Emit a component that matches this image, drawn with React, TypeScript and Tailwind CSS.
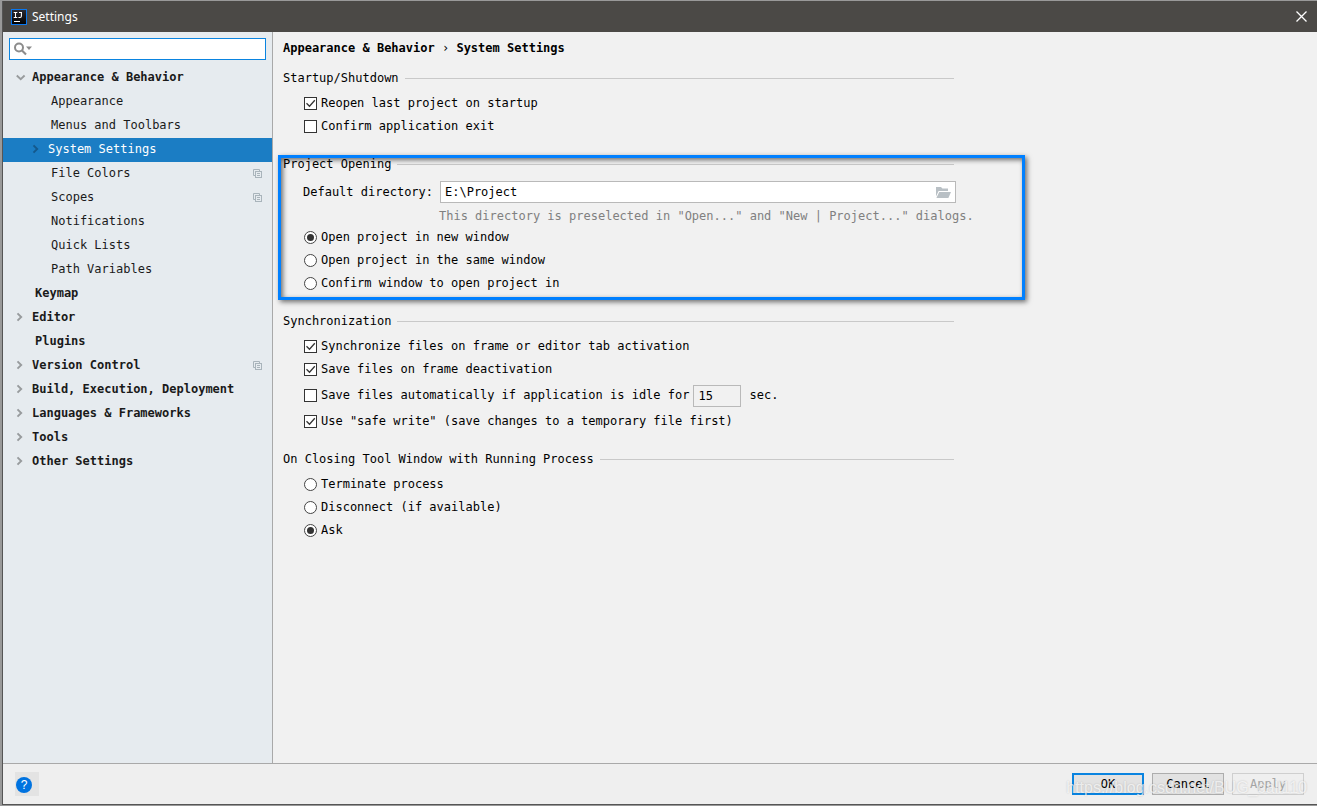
import { ReactNode, useState } from 'react';
import clsx from 'clsx';

interface TreeItem {
  label: string;
  level: 0 | 1;
  state?: 'open' | 'closed';
  shared?: boolean;
}

const TREE: TreeItem[] = [
  { label: 'Appearance & Behavior', level: 0, state: 'open' },
  { label: 'Appearance', level: 1 },
  { label: 'Menus and Toolbars', level: 1 },
  { label: 'System Settings', level: 1, state: 'closed' },
  { label: 'File Colors', level: 1, shared: true },
  { label: 'Scopes', level: 1, shared: true },
  { label: 'Notifications', level: 1 },
  { label: 'Quick Lists', level: 1 },
  { label: 'Path Variables', level: 1 },
  { label: 'Keymap', level: 0 },
  { label: 'Editor', level: 0, state: 'closed' },
  { label: 'Plugins', level: 0 },
  { label: 'Version Control', level: 0, state: 'closed', shared: true },
  { label: 'Build, Execution, Deployment', level: 0, state: 'closed' },
  { label: 'Languages & Frameworks', level: 0, state: 'closed' },
  { label: 'Tools', level: 0, state: 'closed' },
  { label: 'Other Settings', level: 0, state: 'closed' },
];

function Logo() {
  return (
    <svg width="16" height="16" viewBox="0 0 16 16" aria-hidden="true">
      <defs>
        <linearGradient id="logo" x1="0" y1="0" x2="0" y2="1">
          <stop offset="0" stopColor="#2b2b33" />
          <stop offset="1" stopColor="#000" />
        </linearGradient>
      </defs>
      <rect x="0.5" y="0.5" width="15" height="15" fill="url(#logo)" stroke="#0a78f0" />
      <path
        d="M2.7 3.5h3.6M4.5 3.5v5M2.7 8.5h3.6M8 3.5h3M10.4 3.5v3.6q0 1.4-1.4 1.4H7.4M3 12.5h6"
        fill="none"
        stroke="#fff"
        strokeWidth="1.1"
      />
    </svg>
  );
}

function SearchIcon() {
  return (
    <svg width="20" height="14" viewBox="0 0 20 14" fill="none" aria-hidden="true">
      <circle cx="5" cy="5.5" r="4" stroke="#8c8c8c" strokeWidth="2" />
      <path d="M8 8.5l4 4" stroke="#8c8c8c" strokeWidth="2.2" />
      <path d="M12 4.5h6l-3 3.4z" fill="#8c8c8c" />
    </svg>
  );
}

function Chevron({ open, selected }: { open: boolean; selected: boolean }) {
  return (
    <svg width="16" height="12" viewBox="0 0 16 12" fill="none" aria-hidden="true">
      <path
        d={open ? 'M0.8 4.5l3.9 3.7L8.6 4.5' : 'M1.5 2.3l3.7 3.7L1.5 9.7'}
        stroke={selected ? '#14598c' : '#989b9d'}
        strokeWidth="1.9"
      />
    </svg>
  );
}

function SharedIcon() {
  return (
    <svg width="9" height="9" viewBox="0 0 9 9" fill="none" stroke="#a9b4bb" aria-hidden="true">
      <path d="M2 6.5H0.5v-6h6V2" />
      <rect x="2.5" y="2.5" width="6" height="6" />
      <path d="M4 4.5h3M4 6.5h3" />
    </svg>
  );
}

function FolderIcon() {
  return (
    <svg width="15" height="11" viewBox="0 0 15 11" fill="#b9c0c5" aria-hidden="true">
      <path d="M0 0h5l1.4 1.6H12V4H2.6L0 9.5z" />
      <path d="M3.2 5H15l-2.6 6H0.4z" />
    </svg>
  );
}

function Section({ title, children }: { title: string; children: ReactNode }) {
  return (
    <fieldset className="mb-[18px] min-w-0">
      <legend className="flex h-4 w-full items-center gap-1.5 pr-0.5 leading-4">
        <span>{title}</span>
        <span className="h-px flex-1 bg-[#c9c9c9]" />
      </legend>
      {children}
    </fieldset>
  );
}

interface OptionProps {
  label: string;
  checked: boolean;
  onChange: () => void;
}

function CheckOption({ label, checked, onChange }: OptionProps) {
  return (
    <label className="flex h-[23px] items-center gap-1 whitespace-nowrap">
      <span className="relative flex h-[13px] w-[13px]">
        <input
          type="checkbox"
          checked={checked}
          onChange={onChange}
          className="h-[13px] w-[13px] appearance-none border border-[#333] bg-white"
        />
        {checked && (
          <svg className="pointer-events-none absolute inset-0" width="13" height="13" viewBox="0 0 13 13" fill="none">
            <path d="M2.5 6.3l3 3 5.3-6" stroke="#333" strokeWidth="1.3" />
          </svg>
        )}
      </span>
      <span className="pb-0.5">{label}</span>
    </label>
  );
}

function RadioOption({ label, checked, onChange, name }: OptionProps & { name: string }) {
  return (
    <label className="flex h-[23px] items-center gap-1 whitespace-nowrap">
      <span className="relative flex h-[13px] w-[13px]">
        <input
          type="radio"
          name={name}
          checked={checked}
          onChange={onChange}
          className="h-[13px] w-[13px] appearance-none rounded-full border border-[#444] bg-white"
        />
        {checked && <span className="pointer-events-none absolute inset-[3px] rounded-full bg-[#333]" />}
      </span>
      <span className="pb-0.5">{label}</span>
    </label>
  );
}

function RadioList({ name, options, initial }: { name: string; options: string[]; initial: string }) {
  const [value, setValue] = useState(initial);
  return (
    <>
      {options.map((option) => (
        <RadioOption key={option} name={name} label={option} checked={value === option} onChange={() => setValue(option)} />
      ))}
    </>
  );
}

function Sidebar() {
  const [selected, setSelected] = useState('System Settings');

  return (
    <aside className="w-[270px] shrink-0 border-r border-[#a9a9a9] bg-[#e6ebef]">
      <div className="px-1.5 pt-1.5">
        <label className="flex h-[22px] items-center border border-[#0a84e0] bg-white pl-1">
          <SearchIcon />
          <input type="text" aria-label="Search settings" className="min-w-0 flex-1 bg-transparent px-1 outline-none" />
        </label>
      </div>
      <ul className="pt-1.5">
        {TREE.map((item) => {
          const isSelected = item.label === selected;
          return (
            <li key={item.label}>
              <button
                type="button"
                onClick={() => setSelected(item.label)}
                className={clsx(
                  'flex h-6 w-full items-center pr-2.5 pb-0.5 text-left',
                  item.level === 0 && 'font-bold',
                  item.level === 0 && (item.state ? 'pl-[13px]' : 'pl-8'),
                  item.level === 1 && (item.state ? 'pl-[29px]' : 'pl-12'),
                  isSelected ? 'bg-[#1b7dc4] text-white' : 'text-[#1a1a1a]',
                )}
              >
                {item.state && <Chevron open={item.state === 'open'} selected={isSelected} />}
                <span className="flex-1 whitespace-nowrap">{item.label}</span>
                {item.shared && <SharedIcon />}
              </button>
            </li>
          );
        })}
      </ul>
    </aside>
  );
}

function SystemSettings() {
  const [checks, setChecks] = useState({ reopen: true, confirm: false, sync: true, save: true, idle: false, safe: true });
  const toggle = (key: keyof typeof checks) => () => setChecks({ ...checks, [key]: !checks[key] });

  return (
    <main className="min-w-0 flex-1 bg-[#f1f1f1] pt-2 pl-2.5">
      <h1 className="mb-3.5 leading-4 font-bold">
        Appearance &amp; Behavior <span className="font-normal">›</span> System Settings
      </h1>

      <form className="max-w-[673px]">
        <Section title="Startup/Shutdown">
          <div className="pt-1.5 pl-[21px]">
            <CheckOption label="Reopen last project on startup" checked={checks.reopen} onChange={toggle('reopen')} />
            <CheckOption label="Confirm application exit" checked={checks.confirm} onChange={toggle('confirm')} />
          </div>
        </Section>

        <div className="relative">
          <Section title="Project Opening">
            <div className="flex pt-[9px] pl-5">
              <label htmlFor="directory" className="w-[137px] shrink-0 leading-[22px]">
                Default directory:
              </label>
              <div className="flex h-[22px] flex-1 items-center border border-[#b9b9b9] bg-white pr-1">
                <input
                  id="directory"
                  type="text"
                  defaultValue="E:\Project"
                  className="min-w-0 flex-1 bg-transparent px-1 outline-none"
                />
                <button type="button" aria-label="Browse">
                  <FolderIcon />
                </button>
              </div>
            </div>
            <p className="pt-[5px] pl-[156px] leading-4 whitespace-nowrap text-[#808080]">
              This directory is preselected in "Open..." and "New | Project..." dialogs.
            </p>
            <div className="pt-0.5 pl-[21px]">
              <RadioList
                name="opening"
                initial="Open project in new window"
                options={['Open project in new window', 'Open project in the same window', 'Confirm window to open project in']}
              />
            </div>
          </Section>
          {/* highlight frame around the group */}
          <div className="pointer-events-none absolute -top-px -right-[69px] -bottom-[5px] -left-[5px] border-3 border-[#0080ff] shadow-[2px_2px_5px_rgba(0,0,0,0.55),inset_2px_2px_5px_rgba(0,0,0,0.55)]" />
        </div>

        <Section title="Synchronization">
          <div className="pt-1.5 pl-[21px]">
            <CheckOption
              label="Synchronize files on frame or editor tab activation"
              checked={checks.sync}
              onChange={toggle('sync')}
            />
            <CheckOption label="Save files on frame deactivation" checked={checks.save} onChange={toggle('save')} />
            <div className="flex h-[29px] items-center gap-1">
              <CheckOption
                label="Save files automatically if application is idle for"
                checked={checks.idle}
                onChange={toggle('idle')}
              />
              <input
                type="text"
                aria-label="Idle seconds"
                defaultValue="15"
                className="h-[22px] w-12 border border-[#b9b9b9] bg-transparent px-1 outline-none"
              />
              <span className="pb-0.5 pl-1">sec.</span>
            </div>
            <CheckOption
              label={'Use "safe write" (save changes to a temporary file first)'}
              checked={checks.safe}
              onChange={toggle('safe')}
            />
          </div>
        </Section>

        <Section title="On Closing Tool Window with Running Process">
          <div className="pt-1.5 pl-[21px]">
            <RadioList name="closing" initial="Ask" options={['Terminate process', 'Disconnect (if available)', 'Ask']} />
          </div>
        </Section>
      </form>
    </main>
  );
}

function Footer() {
  return (
    <footer className="relative flex h-[41px] items-center justify-between border-t border-[#a9a9a9] bg-[#efefef] pr-[13px] pl-3">
      <button type="button" aria-label="Help" className="flex h-6 w-6 items-center bg-[#e3e3e3] pt-0.5 pl-px">
        <span className="flex h-4 w-4 items-center justify-center rounded-full bg-[#0073e0] font-['Liberation_Sans',sans-serif] text-[12px] leading-4 text-white">
          ?
        </span>
      </button>
      <div className="flex gap-2">
        <button type="button" className="h-[22px] w-[72px] border-2 border-[#0a84e0] bg-[#e2e2e2] leading-4">
          OK
        </button>
        <button type="button" className="h-[22px] w-[72px] border border-[#adadad] bg-[#e2e2e2] leading-4">
          Cancel
        </button>
        <button type="button" disabled className="h-[22px] w-[72px] border border-[#cfcfcf] leading-4 text-[#a5a5a5]">
          Apply
        </button>
      </div>
      <span className="pointer-events-none absolute right-2.5 bottom-1.5 font-['Liberation_Sans',sans-serif] text-[16px] leading-5 text-white/70 [text-shadow:0_0_2px_rgba(0,0,0,0.2)]">
        https://blog.csdn.net/BUG_call110
      </span>
    </footer>
  );
}

export default function App() {
  return (
    <div className="flex min-h-screen flex-col border-t border-b border-l-2 border-[#999] font-['DejaVu_Sans_Mono',monospace] text-[12px] text-black">
      <div className="flex flex-1 flex-col border-b border-l border-[#555]">
        <header className="flex h-[31px] items-center bg-[#4b4946] pr-2.5 pl-2 text-white">
          <Logo />
          <span className="flex-1 pl-[5px] font-['Noto_Sans',sans-serif] text-[12px]">Settings</span>
          <button type="button" aria-label="Close">
            <svg width="11" height="11" viewBox="0 0 11 11" stroke="#fff" strokeWidth="1.3">
              <path d="M0.5 0.5l10 10M10.5 0.5l-10 10" />
            </svg>
          </button>
        </header>
        <div className="flex flex-1">
          <Sidebar />
          <SystemSettings />
        </div>
        <Footer />
      </div>
    </div>
  );
}
